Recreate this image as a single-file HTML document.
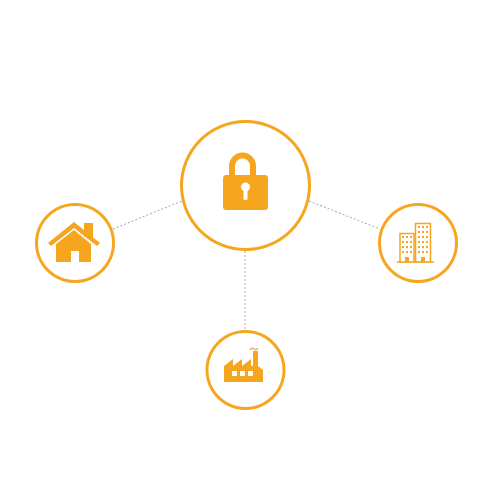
<!DOCTYPE html>
<html><head><style>html,body{margin:0;padding:0;background:#fff;width:500px;height:500px;overflow:hidden}</style></head>
<body>
<svg width="500" height="500" viewBox="0 0 500 500" xmlns="http://www.w3.org/2000/svg">
<g stroke="#aaa" stroke-width="1" stroke-dasharray="2,2" fill="none">
<line x1="113" y1="229" x2="182" y2="201"/>
<line x1="309" y1="201" x2="380" y2="229"/>
<line x1="245" y1="251" x2="245" y2="331"/>
</g>
<g fill="none" stroke="#F6A51E" stroke-width="3">
<circle cx="245.5" cy="185.5" r="64"/>
<circle cx="75" cy="243" r="38.5"/>
<circle cx="418" cy="243" r="38.5"/>
<circle cx="245.5" cy="370" r="38.5"/>
</g>
<g fill="#F6A51E">
<!-- lock -->
<path d="M229 176 V166 A13.5 13.5 0 0 1 256 166 V176 H250 V166 A7.5 7.5 0 0 0 235 166 V176 Z"/>
<rect x="223" y="175" width="45" height="35" rx="3"/>
<!-- house -->
<path d="M48 243 L74 222 L100 243 L97 246 L74 228 L51 246 Z"/>
<rect x="84" y="223" width="9" height="14"/>
<path d="M56 244 L74 230 L91 244 V262 H79 V251 H71 V262 H56 Z"/>
<!-- factory -->
<path d="M224 382 V366 L233 359 V366 L242 359 V366 L251 359 V366 H253 V351 H258 V366 L263 370 V382 Z"/>
</g>
<g fill="#fff">
<circle cx="245.5" cy="187" r="4.5"/>
<rect x="243.5" y="187" width="4" height="13" rx="1.5"/>
<rect x="232" y="371" width="5" height="5"/>
<rect x="240" y="371" width="5" height="5"/>
<rect x="248" y="371" width="5" height="5"/>
</g>
<path d="M250 350 q2 -3 4 -1 q2 2 4 -1" stroke="#F6A51E" stroke-width="1.2" fill="none"/>
<!-- buildings -->
<g stroke="#F6A51E" stroke-width="1.5" fill="none">
<rect x="400" y="233.5" width="14" height="28.5"/>
<rect x="415.5" y="223.5" width="15" height="38.5"/>
<line x1="397" y1="262" x2="434" y2="262"/>
</g>
<g fill="#F6A51E">
<g id="w">
<rect x="402" y="236" width="2" height="2"/><rect x="406" y="236" width="2" height="2"/><rect x="410" y="236" width="2" height="2"/>
<rect x="402" y="241" width="2" height="2"/><rect x="406" y="241" width="2" height="2"/><rect x="410" y="241" width="2" height="2"/>
<rect x="402" y="246" width="2" height="2"/><rect x="406" y="246" width="2" height="2"/><rect x="410" y="246" width="2" height="2"/>
<rect x="402" y="251" width="2" height="2"/><rect x="406" y="251" width="2" height="2"/><rect x="410" y="251" width="2" height="2"/>
</g>
<rect x="418" y="226" width="2" height="2"/><rect x="422" y="226" width="2" height="2"/><rect x="426" y="226" width="2" height="2"/>
<rect x="418" y="231" width="2" height="2"/><rect x="422" y="231" width="2" height="2"/><rect x="426" y="231" width="2" height="2"/>
<rect x="418" y="236" width="2" height="2"/><rect x="422" y="236" width="2" height="2"/><rect x="426" y="236" width="2" height="2"/>
<rect x="418" y="241" width="2" height="2"/><rect x="422" y="241" width="2" height="2"/><rect x="426" y="241" width="2" height="2"/>
<rect x="418" y="246" width="2" height="2"/><rect x="422" y="246" width="2" height="2"/><rect x="426" y="246" width="2" height="2"/>
<rect x="418" y="251" width="2" height="2"/><rect x="422" y="251" width="2" height="2"/><rect x="426" y="251" width="2" height="2"/>
<rect x="405" y="257" width="4" height="5"/><rect x="421" y="257" width="4" height="5"/>
</g>
</svg>
</body></html>
